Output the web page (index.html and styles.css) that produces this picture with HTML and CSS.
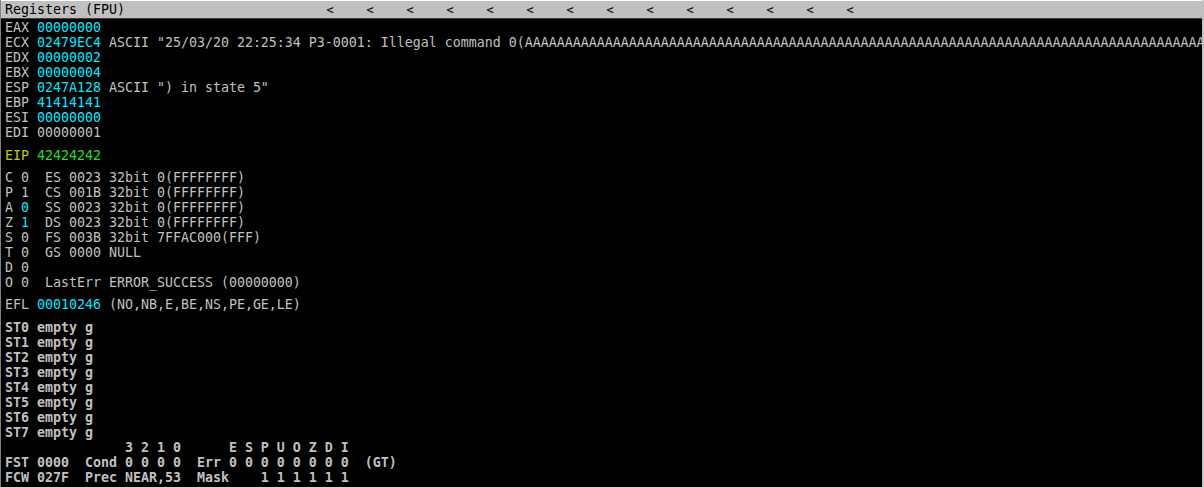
FILE: index.html
```html
<!DOCTYPE html>
<html lang="en">
<head>
  <meta charset="UTF-8">
  <title>Registers (FPU)</title>
  <link rel="stylesheet" href="styles.css">
</head>
<body>

<div class="pane">
  <div class="titlebar">
    <span class="title">Registers (FPU)</span>
    <div class="arrows" id="arrows"></div>
  </div>

  <div class="regs">
    <div class="group">
      <div class="row">EAX <span class="cyan">00000000</span></div>
      <div class="row">ECX <span class="cyan">02479EC4</span> ASCII "25/03/20 22:25:34 P3-0001: Illegal command 0(<span id="fill"></span></div>
      <div class="row">EDX <span class="cyan">00000002</span></div>
      <div class="row">EBX <span class="cyan">00000004</span></div>
      <div class="row">ESP <span class="cyan">0247A128</span> ASCII ") in state 5"</div>
      <div class="row">EBP <span class="cyan">41414141</span></div>
      <div class="row">ESI <span class="cyan">00000000</span></div>
      <div class="row">EDI 00000001</div>
    </div>

    <div class="group eip">
      <div class="row"><span class="yellow">EIP</span> <span class="green">42424242</span></div>
    </div>

    <div class="group">
      <div class="row">C 0  ES 0023 32bit 0(FFFFFFFF)</div>
      <div class="row">P 1  CS 001B 32bit 0(FFFFFFFF)</div>
      <div class="row">A <span class="cyan">0</span>  SS 0023 32bit 0(FFFFFFFF)</div>
      <div class="row">Z <span class="cyan">1</span>  DS 0023 32bit 0(FFFFFFFF)</div>
      <div class="row">S 0  FS 003B 32bit 7FFAC000(FFF)</div>
      <div class="row">T 0  GS 0000 NULL</div>
      <div class="row">D 0</div>
      <div class="row">O 0  LastErr ERROR_SUCCESS (00000000)</div>
    </div>

    <div class="group">
      <div class="row">EFL <span class="cyan">00010246</span> (NO,NB,E,BE,NS,PE,GE,LE)</div>
    </div>

    <div class="group fpu">
      <div class="row">ST0 empty g</div>
      <div class="row">ST1 empty g</div>
      <div class="row">ST2 empty g</div>
      <div class="row">ST3 empty g</div>
      <div class="row">ST4 empty g</div>
      <div class="row">ST5 empty g</div>
      <div class="row">ST6 empty g</div>
      <div class="row">ST7 empty g</div>
      <div class="row">               3 2 1 0      E S P U O Z D I</div>
      <div class="row">FST 0000  Cond 0 0 0 0  Err 0 0 0 0 0 0 0 0  (GT)</div>
      <div class="row">FCW 027F  Prec NEAR,53  Mask    1 1 1 1 1 1</div>
    </div>
  </div>
</div>

<script>
  // fourteen column arrows in the title bar
  const arrows = document.getElementById('arrows');
  for (let i = 0; i < 14; i++) {
    const a = document.createElement('span');
    a.className = 'arrow';
    a.textContent = '<';
    arrows.append(a);
  }
  // the long run of A's that runs off the pane
  document.getElementById('fill').textContent = 'A'.repeat(140);
</script>

</body>
</html>
```

FILE: styles.css
```css
* { box-sizing: border-box; margin: 0; padding: 0; }
body { background: #000; width: 1204px; height: 487px; overflow: hidden; }

.pane {
  height: 487px;
  background: #000;
  border-left: 1px solid #808080;
  border-right: 2px solid #c0c0c0;
  overflow: hidden;
}

/* title bar */
.titlebar {
  height: 19px;
  background: #c0c0c0;
  border-top: 1px solid #fff;
  border-bottom: 1px solid #404040;
  display: flex;
  align-items: center;
  font-family: "DejaVu Sans Mono", monospace;
  font-size: 13.3px;
  color: #000;
}
.title {
  width: 309px;
  padding-left: 4px;
  white-space: pre;
}
.arrows { display: flex; }
.arrow {
  width: 40px;
  text-align: center;
  font-size: 12px;
}

/* register dump */
.regs {
  padding: 1px 0 0 4px;
  font-family: "DejaVu Sans Mono", monospace;
  font-size: 13.29px;
  line-height: 15px;
  color: #c0c0c0;
}
.group { margin-top: 7px; }
.group:first-child { margin-top: 0; }
.eip { margin-top: 8px; }
.fpu { font-weight: bold; margin-top: 8px; }
.row { white-space: pre; height: 15px; }

.cyan { color: #00e8ff; }
.yellow { color: #c8c800; }
.green { color: #20e020; }
```
